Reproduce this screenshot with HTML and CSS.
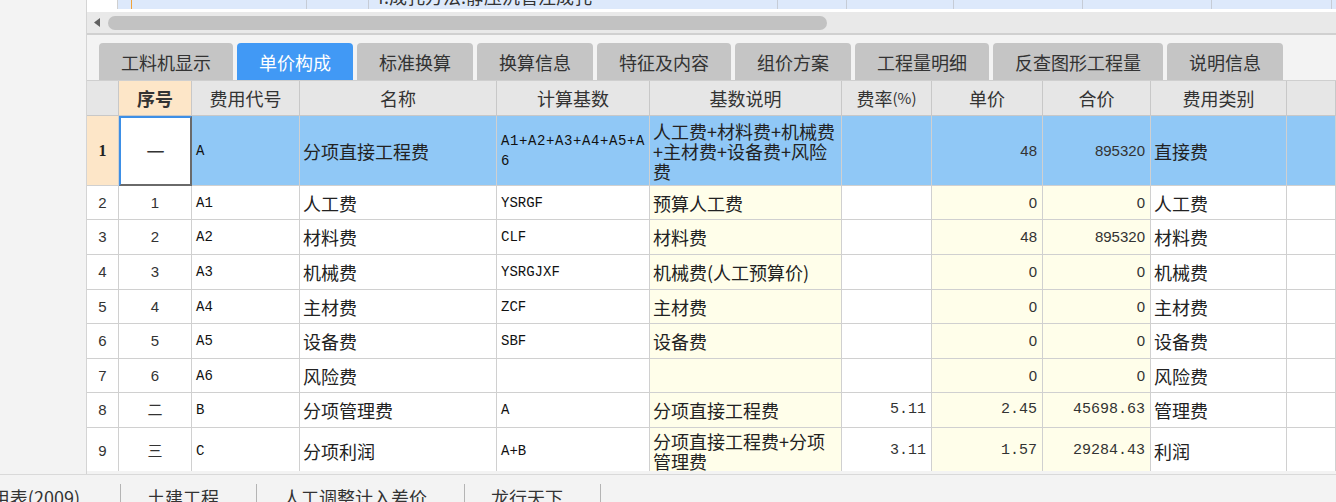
FILE: index.html
```html
<!DOCTYPE html>
<html lang="zh-CN">
<head>
<meta charset="utf-8">
<title>单价构成</title>
<link rel="stylesheet" href="styles.css">
</head>
<body>
<div class="app">
  <div class="main">
    <aside class="side"></aside>
    <section class="content">
      <div class="prevrow">
        <div class="pc pc-white"></div>
        <div class="pc pc-orange"></div>
        <div class="pc"></div>
        <div class="pc"></div>
        <div class="pc pc-text"><span>4.成孔方法:静压沉管注成孔</span></div>
        <div class="pc"></div>
        <div class="pc"></div>
        <div class="pc"></div>
        <div class="pc"></div>
        <div class="pc"></div>
        <div class="pc pc-last"></div>
      </div>
      <div class="hscroll">
        <svg class="arrow" width="6" height="9" viewBox="0 0 6 9"><path d="M6 0 L0 4.5 L6 9 Z" fill="#606060"/></svg>
        <div class="thumb"></div>
      </div>
      <nav class="tabs">
        <div class="tab w134">工料机显示</div>
        <div class="tab w116 active">单价构成</div>
        <div class="tab w116">标准换算</div>
        <div class="tab w116">换算信息</div>
        <div class="tab w134">特征及内容</div>
        <div class="tab w116">组价方案</div>
        <div class="tab w134">工程量明细</div>
        <div class="tab w170">反查图形工程量</div>
        <div class="tab w116">说明信息</div>
      </nav>
      <div class="gridview">
        <div class="grid">
          <div class="row hd">
            <div class="c c-rn"></div>
            <div class="c c-seq">序号</div>
            <div class="c">费用代号</div>
            <div class="c">名称</div>
            <div class="c">计算基数</div>
            <div class="c">基数说明</div>
            <div class="c">费率<span class="pct">(%)</span></div>
            <div class="c">单价</div>
            <div class="c">合价</div>
            <div class="c">费用类别</div>
            <div class="c"></div>
          </div>
          <div class="row sel">
            <div class="c c-rn rn-sel">1</div>
            <div class="c c-seq focus">一</div>
            <div class="c mono">A</div>
            <div class="c">分项直接工程费</div>
            <div class="c mono base-wrap"><span>A1+A2+A3+A4+A5+A6</span></div>
            <div class="c"><span>人工费+材料费+机械费+主材费+设备费+风险费</span></div>
            <div class="c"></div>
            <div class="c num">48</div>
            <div class="c num">895320</div>
            <div class="c">直接费</div>
            <div class="c"></div>
          </div>
          <div class="row">
            <div class="c c-rn">2</div>
            <div class="c c-seq">1</div>
            <div class="c mono">A1</div>
            <div class="c">人工费</div>
            <div class="c mono">YSRGF</div>
            <div class="c yel">预算人工费</div>
            <div class="c"></div>
            <div class="c num yel">0</div>
            <div class="c num yel">0</div>
            <div class="c">人工费</div>
            <div class="c"></div>
          </div>
          <div class="row">
            <div class="c c-rn">3</div>
            <div class="c c-seq">2</div>
            <div class="c mono">A2</div>
            <div class="c">材料费</div>
            <div class="c mono">CLF</div>
            <div class="c yel">材料费</div>
            <div class="c"></div>
            <div class="c num yel">48</div>
            <div class="c num yel">895320</div>
            <div class="c">材料费</div>
            <div class="c"></div>
          </div>
          <div class="row">
            <div class="c c-rn">4</div>
            <div class="c c-seq">3</div>
            <div class="c mono">A3</div>
            <div class="c">机械费</div>
            <div class="c mono">YSRGJXF</div>
            <div class="c yel">机械费(人工预算价)</div>
            <div class="c"></div>
            <div class="c num yel">0</div>
            <div class="c num yel">0</div>
            <div class="c">机械费</div>
            <div class="c"></div>
          </div>
          <div class="row">
            <div class="c c-rn">5</div>
            <div class="c c-seq">4</div>
            <div class="c mono">A4</div>
            <div class="c">主材费</div>
            <div class="c mono">ZCF</div>
            <div class="c yel">主材费</div>
            <div class="c"></div>
            <div class="c num yel">0</div>
            <div class="c num yel">0</div>
            <div class="c">主材费</div>
            <div class="c"></div>
          </div>
          <div class="row">
            <div class="c c-rn">6</div>
            <div class="c c-seq">5</div>
            <div class="c mono">A5</div>
            <div class="c">设备费</div>
            <div class="c mono">SBF</div>
            <div class="c yel">设备费</div>
            <div class="c"></div>
            <div class="c num yel">0</div>
            <div class="c num yel">0</div>
            <div class="c">设备费</div>
            <div class="c"></div>
          </div>
          <div class="row">
            <div class="c c-rn">7</div>
            <div class="c c-seq">6</div>
            <div class="c mono">A6</div>
            <div class="c">风险费</div>
            <div class="c mono"></div>
            <div class="c yel"></div>
            <div class="c"></div>
            <div class="c num yel">0</div>
            <div class="c num yel">0</div>
            <div class="c">风险费</div>
            <div class="c"></div>
          </div>
          <div class="row">
            <div class="c c-rn">8</div>
            <div class="c c-seq">二</div>
            <div class="c mono">B</div>
            <div class="c">分项管理费</div>
            <div class="c mono">A</div>
            <div class="c yel">分项直接工程费</div>
            <div class="c dec">5.11</div>
            <div class="c dec yel">2.45</div>
            <div class="c dec yel">45698.63</div>
            <div class="c">管理费</div>
            <div class="c"></div>
          </div>
          <div class="row">
            <div class="c c-rn">9</div>
            <div class="c c-seq">三</div>
            <div class="c mono">C</div>
            <div class="c">分项利润</div>
            <div class="c mono">A+B</div>
            <div class="c yel"><span>分项直接工程费+分项管理费</span></div>
            <div class="c dec">3.11</div>
            <div class="c dec yel">1.57</div>
            <div class="c dec yel">29284.43</div>
            <div class="c">利润</div>
            <div class="c"></div>
          </div>
        </div>
      </div>
    </section>
  </div>
  <footer class="bottombar">
    <div class="bt bt-first"><span>费用表(2009)</span></div>
    <span class="sep"></span>
    <div class="bt">土建工程</div>
    <span class="sep"></span>
    <div class="bt">人工调整计入差价</div>
    <span class="sep"></span>
    <div class="bt">龙行天下</div>
    <span class="sep"></span>
  </footer>
</div>
</body>
</html>
```

FILE: styles.css
```css
* { box-sizing: border-box; }
html, body { margin: 0; padding: 0; }
body {
  width: 1336px;
  height: 502px;
  overflow: hidden;
  background: #f3f3f3;
  font-family: "Noto Sans CJK SC", "Noto Sans", sans-serif;
  color: #222;
}
.app { display: flex; flex-direction: column; height: 502px; }
.main { display: flex; height: 474px; }
.side {
  width: 87px;
  flex: none;
  background: #f3f3f3;
  border-right: 1px solid #d4d4d4;
}
.content { flex: 1; display: flex; flex-direction: column; min-width: 0; }

/* previous grid row, cut off at the top */
.prevrow {
  height: 12px;
  display: grid;
  grid-template-columns: 31px 14px 175px 62px 409px 69px 107px 129px 129px 120px 1fr;
  border-bottom: 3px solid #fff;
  overflow: hidden;
}
.pc { background: #dde9fb; border-right: 1px solid #c6ccd6; overflow: hidden; }
.pc-white { background: #fff; border-right-color: #d0d0d0; }
.pc-orange { border-right-color: #f0a33a; }
.pc-last { border-right: none; }
.pc-text span {
  display: block;
  margin-top: -13px;
  padding-left: 5px;
  font-size: 18px;
  line-height: 18px;
  white-space: nowrap;
  color: #333;
}

/* horizontal scrollbar */
.hscroll {
  height: 23px;
  background: #e9e9e9;
  border-bottom: 2px solid #d0d0d0;
  display: flex;
  align-items: center;
  padding-left: 7px;
}
.arrow { display: block; margin-right: 8px; }
.thumb { width: 719px; height: 14px; border-radius: 7px; background: #c2c2c2; }

/* tabs */
.tabs {
  display: flex;
  gap: 4px;
  padding: 8px 0 0 12px;
  background: #f3f3f3;
  height: 45px;
}
.tab {
  height: 37px;
  border-radius: 4px 4px 0 0;
  background: #c5c5c5;
  color: #333;
  font-size: 18px;
  display: flex;
  align-items: center;
  justify-content: center;
}
.tab.active { background: #4199f5; color: #fff; }
.w116 { width: 116px; }
.w134 { width: 134px; }
.w170 { width: 170px; }

/* grid */
.gridview { flex: 1; overflow: hidden; margin-bottom: 3px; background: #fff; }
.grid {
  display: grid;
  grid-template-columns: 32px 73px 108px 197px 153px 192px 90px 111px 108px 136px 1fr;
  grid-template-rows: 35px 70px 34px 35px 35px 34px 35px 34px 35px 46px;
  border-top: 1px solid #cfcfcf;
}
.row { display: contents; }
.c {
  background: #fff;
  border-right: 1px solid #d0d0d0;
  border-bottom: 1px solid #d0d0d0;
  display: flex;
  align-items: center;
  padding: 0 3px;
  overflow: hidden;
  font-size: 18px;
  line-height: 20px;
  color: #222;
}
.hd .c { background: #e6e6e6; justify-content: center; color: #333; border-color: #c8c8c8; }
.hd .c-seq { background: #fde6c8; font-weight: bold; font-family: "Noto Sans CJK SC", sans-serif; font-size: 18px; }
.pct { font-size: 15px; }
.c-rn, .c-seq { justify-content: center; padding: 0; }
.c-rn { font-family: "Liberation Sans", sans-serif; font-size: 15px; color: #333; }
.c-seq { font-family: "Liberation Sans", "Noto Sans CJK SC", sans-serif; font-size: 15px; color: #333; }
.mono { font-family: "Liberation Mono", monospace; font-size: 14px; padding-left: 4px; color: #111; }
.num { justify-content: flex-end; padding-right: 5px; font-family: "Liberation Sans", sans-serif; font-size: 15px; color: #333; }
.dec { justify-content: flex-end; padding-right: 5px; font-family: "Liberation Mono", monospace; font-size: 15px; color: #333; }
.yel { background: #fffeea; }
.base-wrap span { word-break: break-all; letter-spacing: 0.6px; }

.sel .c { background: #90c8f6; }
.sel .rn-sel {
  background: #fde6c8;
  font-family: "Liberation Serif", serif;
  font-weight: bold;
  font-size: 16px;
  color: #222;
}
.sel .focus {
  background: #fff;
  border: 2px solid;
  border-color: #3d8fe6 #6a6a6a #6a6a6a #3d8fe6;
  font-family: "Noto Sans CJK SC", sans-serif;
  font-size: 18px;
}

/* bottom bar */
.bottombar {
  height: 28px;
  border-top: 1px solid #d9d9d9;
  background: #f3f3f3;
  display: flex;
  align-items: flex-start;
  overflow: hidden;
}
.bt {
  padding: 10px 37px 0 26px;
  font-size: 18px;
  line-height: 24px;
  color: #333;
  white-space: nowrap;
}
.bt-first {
  width: 120px;
  flex: none;
  display: flex;
  justify-content: flex-end;
  overflow: hidden;
  padding-left: 0;
  padding-right: 40px;
}
.bt-first span { flex: none; }
.sep { width: 1px; height: 20px; margin-top: 9px; background: #b4b4b4; flex: none; }
```
